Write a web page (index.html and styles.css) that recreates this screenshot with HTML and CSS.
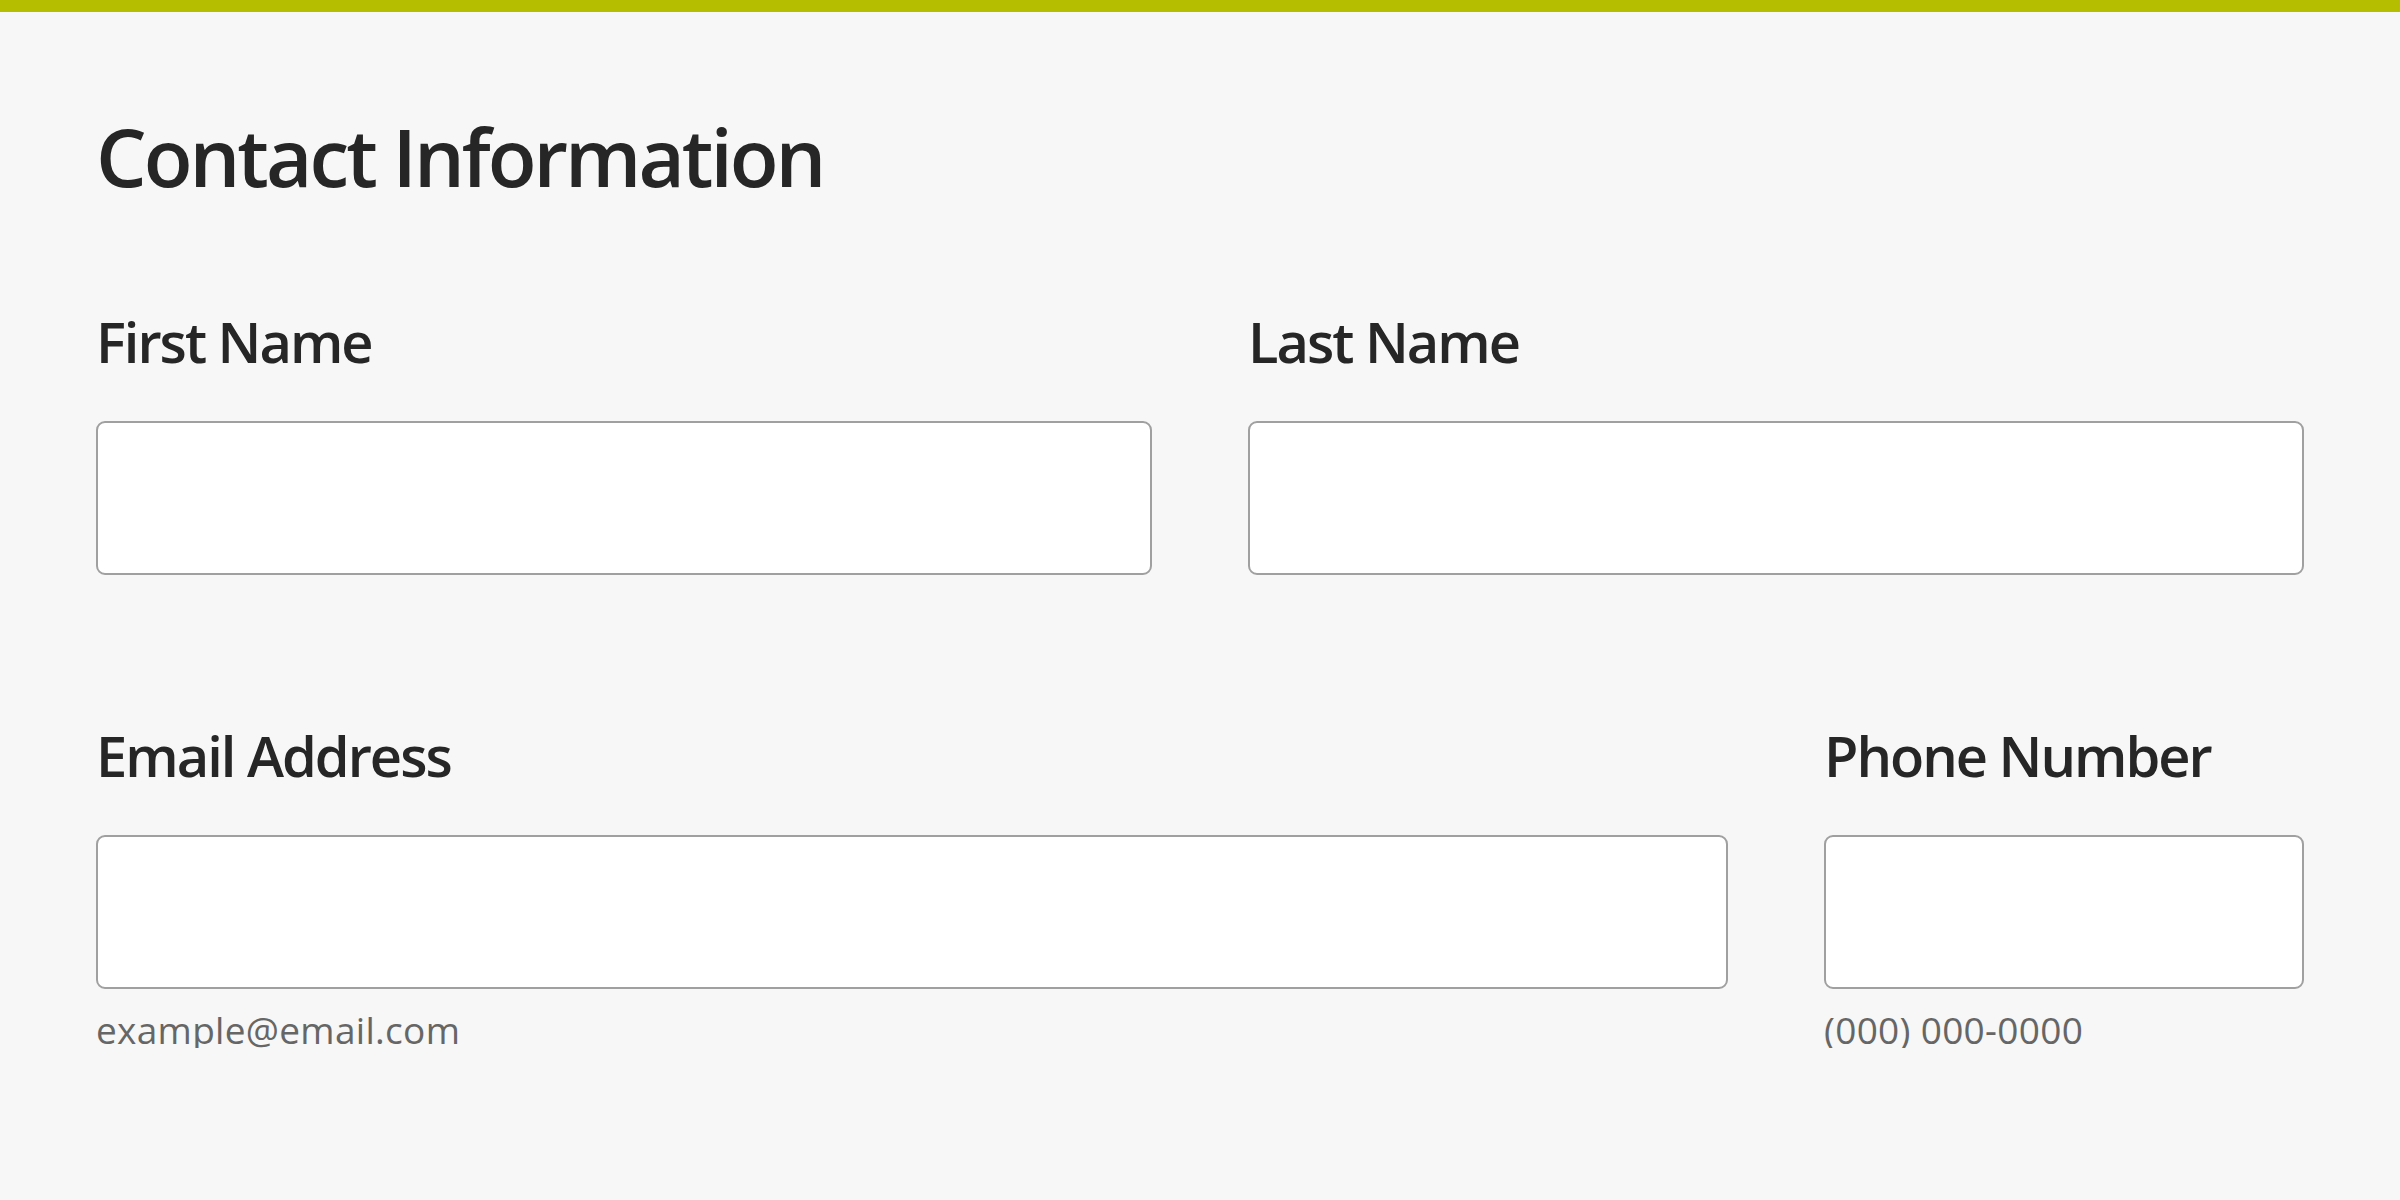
FILE: index.html
```html
<!DOCTYPE html>
<html lang="en">
<head>
  <meta charset="UTF-8">
  <meta name="viewport" content="width=device-width, initial-scale=1.0">
  <title>Contact Information</title>
  <link rel="stylesheet" href="styles.css">
</head>
<body>
  <div class="top-bar"></div>
  <form class="form">
    <h1>Contact Information</h1>

    <div class="row row-names">
      <div class="field">
        <label for="first-name">First Name</label>
        <input type="text" id="first-name">
      </div>
      <div class="field">
        <label for="last-name">Last Name</label>
        <input type="text" id="last-name">
      </div>
    </div>

    <div class="row row-contact">
      <div class="field">
        <label for="email">Email Address</label>
        <input type="email" id="email">
        <span class="hint">example@email.com</span>
      </div>
      <div class="field">
        <label for="phone">Phone Number</label>
        <input type="tel" id="phone">
        <span class="hint">(000) 000-0000</span>
      </div>
    </div>
  </form>
</body>
</html>
```

FILE: styles.css
```css
body {
  margin: 0;
  background: #f7f7f7;
  color: #262626;
  font-family: "Open Sans", "Noto Sans", sans-serif;
}

.top-bar {
  height: 12px;
  background: #b5bf00;
}

.form {
  padding: 0 96px;
}

h1 {
  margin: 104px 0 0;
  font-size: 80px;
  font-weight: 600;
  line-height: 1;
  letter-spacing: -3px;
}

.row {
  display: grid;
  column-gap: 96px;
}

.row-names {
  grid-template-columns: 1fr 1fr;
  margin-top: 117px;
}

.row-contact {
  grid-template-columns: 1fr 480px;
  margin-top: 152px;
}

.field {
  display: flex;
  flex-direction: column;
}

label {
  font-size: 56px;
  font-weight: 600;
  line-height: 1;
  margin-bottom: 52px;
  letter-spacing: -2px;
}

input {
  height: 154px;
  box-sizing: border-box;
  border: 2px solid #a0a0a0;
  border-radius: 9px;
  background: #ffffff;
  font: inherit;
  font-size: 40px;
  padding: 0 24px;
}

.hint {
  margin-top: 22px;
  font-size: 37px;
  line-height: 1;
  color: #666666;
  letter-spacing: 0.3px;
}
```
